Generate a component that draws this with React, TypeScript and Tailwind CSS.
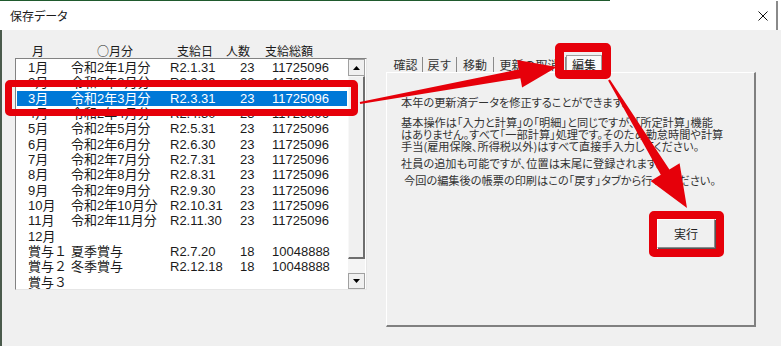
const rows = [
  ["1月", "令和2年1月分", "R2.1.31", "23", "11725096"],
  ["2月", "令和2年2月分", "R2.2.29", "23", "11725096"],
  ["3月", "令和2年3月分", "R2.3.31", "23", "11725096"],
  ["4月", "令和2年4月分", "R2.4.30", "23", "11725096"],
  ["5月", "令和2年5月分", "R2.5.31", "23", "11725096"],
  ["6月", "令和2年6月分", "R2.6.30", "23", "11725096"],
  ["7月", "令和2年7月分", "R2.7.31", "23", "11725096"],
  ["8月", "令和2年8月分", "R2.8.31", "23", "11725096"],
  ["9月", "令和2年9月分", "R2.9.30", "23", "11725096"],
  ["10月", "令和2年10月分", "R2.10.31", "23", "11725096"],
  ["11月", "令和2年11月分", "R2.11.30", "23", "11725096"],
  ["12月", "", "", "", ""],
  ["賞与１", "夏季賞与", "R2.7.20", "18", "10048888"],
  ["賞与２", "冬季賞与", "R2.12.18", "18", "10048888"],
  ["賞与３", "", "", "", ""],
];

const tabs = [
  { label: "確認", w: "w-[34px]" },
  { label: "戻す", w: "w-[34px]" },
  { label: "移動", w: "w-[37px]" },
  { label: "更新の取消", w: "w-[72px]" },
];

const para = [
  "基本操作は「入力と計算」の「明細」と同じですが、「所定計算」機能",
  "はありません。すべて「一部計算」処理です。そのため勤怠時間や計算",
  "手当(雇用保険、所得税以外)はすべて直接手入力してください。",
];

function Arrows() {
  return (
    <svg className="pointer-events-none absolute left-0 top-0" width="781" height="346" viewBox="0 0 781 346">
      <polygon
        points="359.8,102 518.8,69.4 517.1,60 557,67 522.1,87.6 520.4,78.2 360.2,104"
        fill="#e6000a"
      />
      <polygon
        points="609.9,79.5 669.4,169.5 679.6,163.3 687,208 650.6,180.9 660.8,174.7 608.1,80.5"
        fill="#e6000a"
      />
    </svg>
  );
}

export default function App() {
  return (
    <div className="relative h-[346px] w-[781px] overflow-hidden bg-[#f0f0f0] font-['Liberation_Sans','Noto_Sans_CJK_JP',sans-serif] text-[#1b1b1b]">
      <div className="flex h-[1px]">
        <div className="w-[610px] bg-[#1f5a2d]" />
        <div className="flex-1 bg-white" />
      </div>
      <div className="flex h-[29px] bg-white">
        <div className="flex flex-1 items-center justify-between border-r-2 border-[#8a8a8a] pl-[10px] pr-[8px]">
          <span className="font-['Noto_Sans_CJK_JP',sans-serif] text-[12px] [font-feature-settings:'palt']">保存データ</span>
          <svg width="10" height="10" viewBox="0 0 10 10">
            <path d="M0.5 0.5 L9.5 9.5 M9.5 0.5 L0.5 9.5" stroke="#111" strokeWidth="1" />
          </svg>
        </div>
        <div className="w-[3px]" />
      </div>

      <div className="flex h-[316px] border-l-2 border-[#4a5a4c]">
        {/* left: list */}
        <div className="pl-[13px] pt-[14px]">
          <div className="flex h-[14px] items-center pl-[17px] font-['Noto_Sans_CJK_JP',sans-serif] text-[12px] leading-none">
            <span className="w-[65px]">月</span>
            <span className="w-[80px]">○月分</span>
            <span className="w-[49px]">支給日</span>
            <span className="w-[39px]">人数</span>
            <span>支給総額</span>
          </div>
          <div className="flex h-[232px] w-[352px] border border-b-[#e6e6e6] border-l-[#828282] border-r-[#e6e6e6] border-t-[#828282] bg-white">
            <div className="flex-1 px-[1px] pt-[1px]">
              {rows.map((r, i) => (
                <div
                  key={i}
                  className={
                    "flex h-[15.33px] items-center pl-[11px] text-[13px] leading-none " +
                    (i === 2 ? "bg-[#0078d7] text-white" : "")
                  }
                >
                  <span className="w-[43px]">{r[0]}</span>
                  <span className="w-[99px]">{r[1]}</span>
                  <span className="w-[70px]">{r[2]}</span>
                  <span className="w-[32px]">{r[3]}</span>
                  <span>{r[4]}</span>
                </div>
              ))}
            </div>
            <div className="mr-[1px] flex w-[17px] flex-col bg-[#f4f4f4]">
              <div className="flex h-[17px] items-center justify-center border border-[#a0a0a0] bg-[#f0f0f0]">
                <svg width="7" height="4" viewBox="0 0 7 4">
                  <polygon points="0,4 7,4 3.5,0" fill="#000" />
                </svg>
              </div>
              <div className="h-[183px] border-b-2 border-l border-r-2 border-t border-b-[#6e6e6e] border-l-[#f8f8f8] border-r-[#6e6e6e] border-t-[#f8f8f8] bg-[#f0f0f0]" />
              <div className="flex-1" />
              <div className="flex h-[16px] items-center justify-center border border-[#a0a0a0] bg-[#f0f0f0]">
                <svg width="7" height="4" viewBox="0 0 7 4">
                  <polygon points="0,0 7,0 3.5,4" fill="#000" />
                </svg>
              </div>
            </div>
          </div>
        </div>

        {/* right: tab panel */}
        <div className="ml-[19px] pt-[25px] font-['Noto_Sans_CJK_JP',sans-serif]">
          <div className="flex h-[17px] items-end pl-[3px]">
            {tabs.map((t) => (
              <div
                key={t.label}
                className={t.w + " flex h-[15px] items-center justify-center overflow-hidden whitespace-nowrap border-r border-[#8a8a8a] text-[12px] leading-none text-[#333]"}
              >
                {t.label}
              </div>
            ))}
            <div className="-mb-[1px] flex h-[18px] w-[36px] items-center justify-center border-l border-r border-t border-[#a0a0a0] bg-[#fafafa] text-[12px] leading-none text-[#222]">
              編集
            </div>
          </div>
          <div className="h-[255px] w-[370px] border-b-2 border-l border-r-2 border-t border-b-[#808080] border-l-white border-r-[#808080] border-t-white pl-[14px] pt-[23px] text-[11.2px] leading-[12px] text-[#333] [font-feature-settings:'palt']">
            <div className="h-[12px] whitespace-nowrap">本年の更新済データを修正することができます。</div>
            <div className="mt-[8px]">
              {para.map((l) => (
                <div key={l} className="h-[12px] whitespace-nowrap">
                  {l}
                </div>
              ))}
            </div>
            <div className="mt-[5px] h-[12px] whitespace-nowrap">社員の追加も可能ですが、位置は末尾に登録されます。</div>
            <div className="mt-[5px] h-[12px] whitespace-nowrap pl-[3px]">今回の編集後の帳票の印刷はこの「戻す」タブから行ってください。</div>
            <div className="mt-[33px] flex justify-end pr-[39px]">
              <button className="h-[29px] w-[58px] border border-b-[#8a8a8a] border-l-white border-r-[#8a8a8a] border-t-white bg-[#f0f0f0] text-[12px] text-[#222] shadow-[1px_1px_0_#555]">
                実行
              </button>
            </div>
          </div>
        </div>
      </div>

      {/* callouts */}
      <div className="absolute left-[5px] top-[80px] h-[36px] w-[353px] rounded-[5px] border-[7px] border-[#e6000a]" />
      <div className="absolute left-[555px] top-[43px] h-[36px] w-[56px] rounded-[5px] border-[9px] border-[#e6000a]" />
      <div className="absolute left-[649px] top-[211px] h-[46px] w-[75px] rounded-[5px] border-[8px] border-[#e6000a]" />
      <Arrows />
    </div>
  );
}
